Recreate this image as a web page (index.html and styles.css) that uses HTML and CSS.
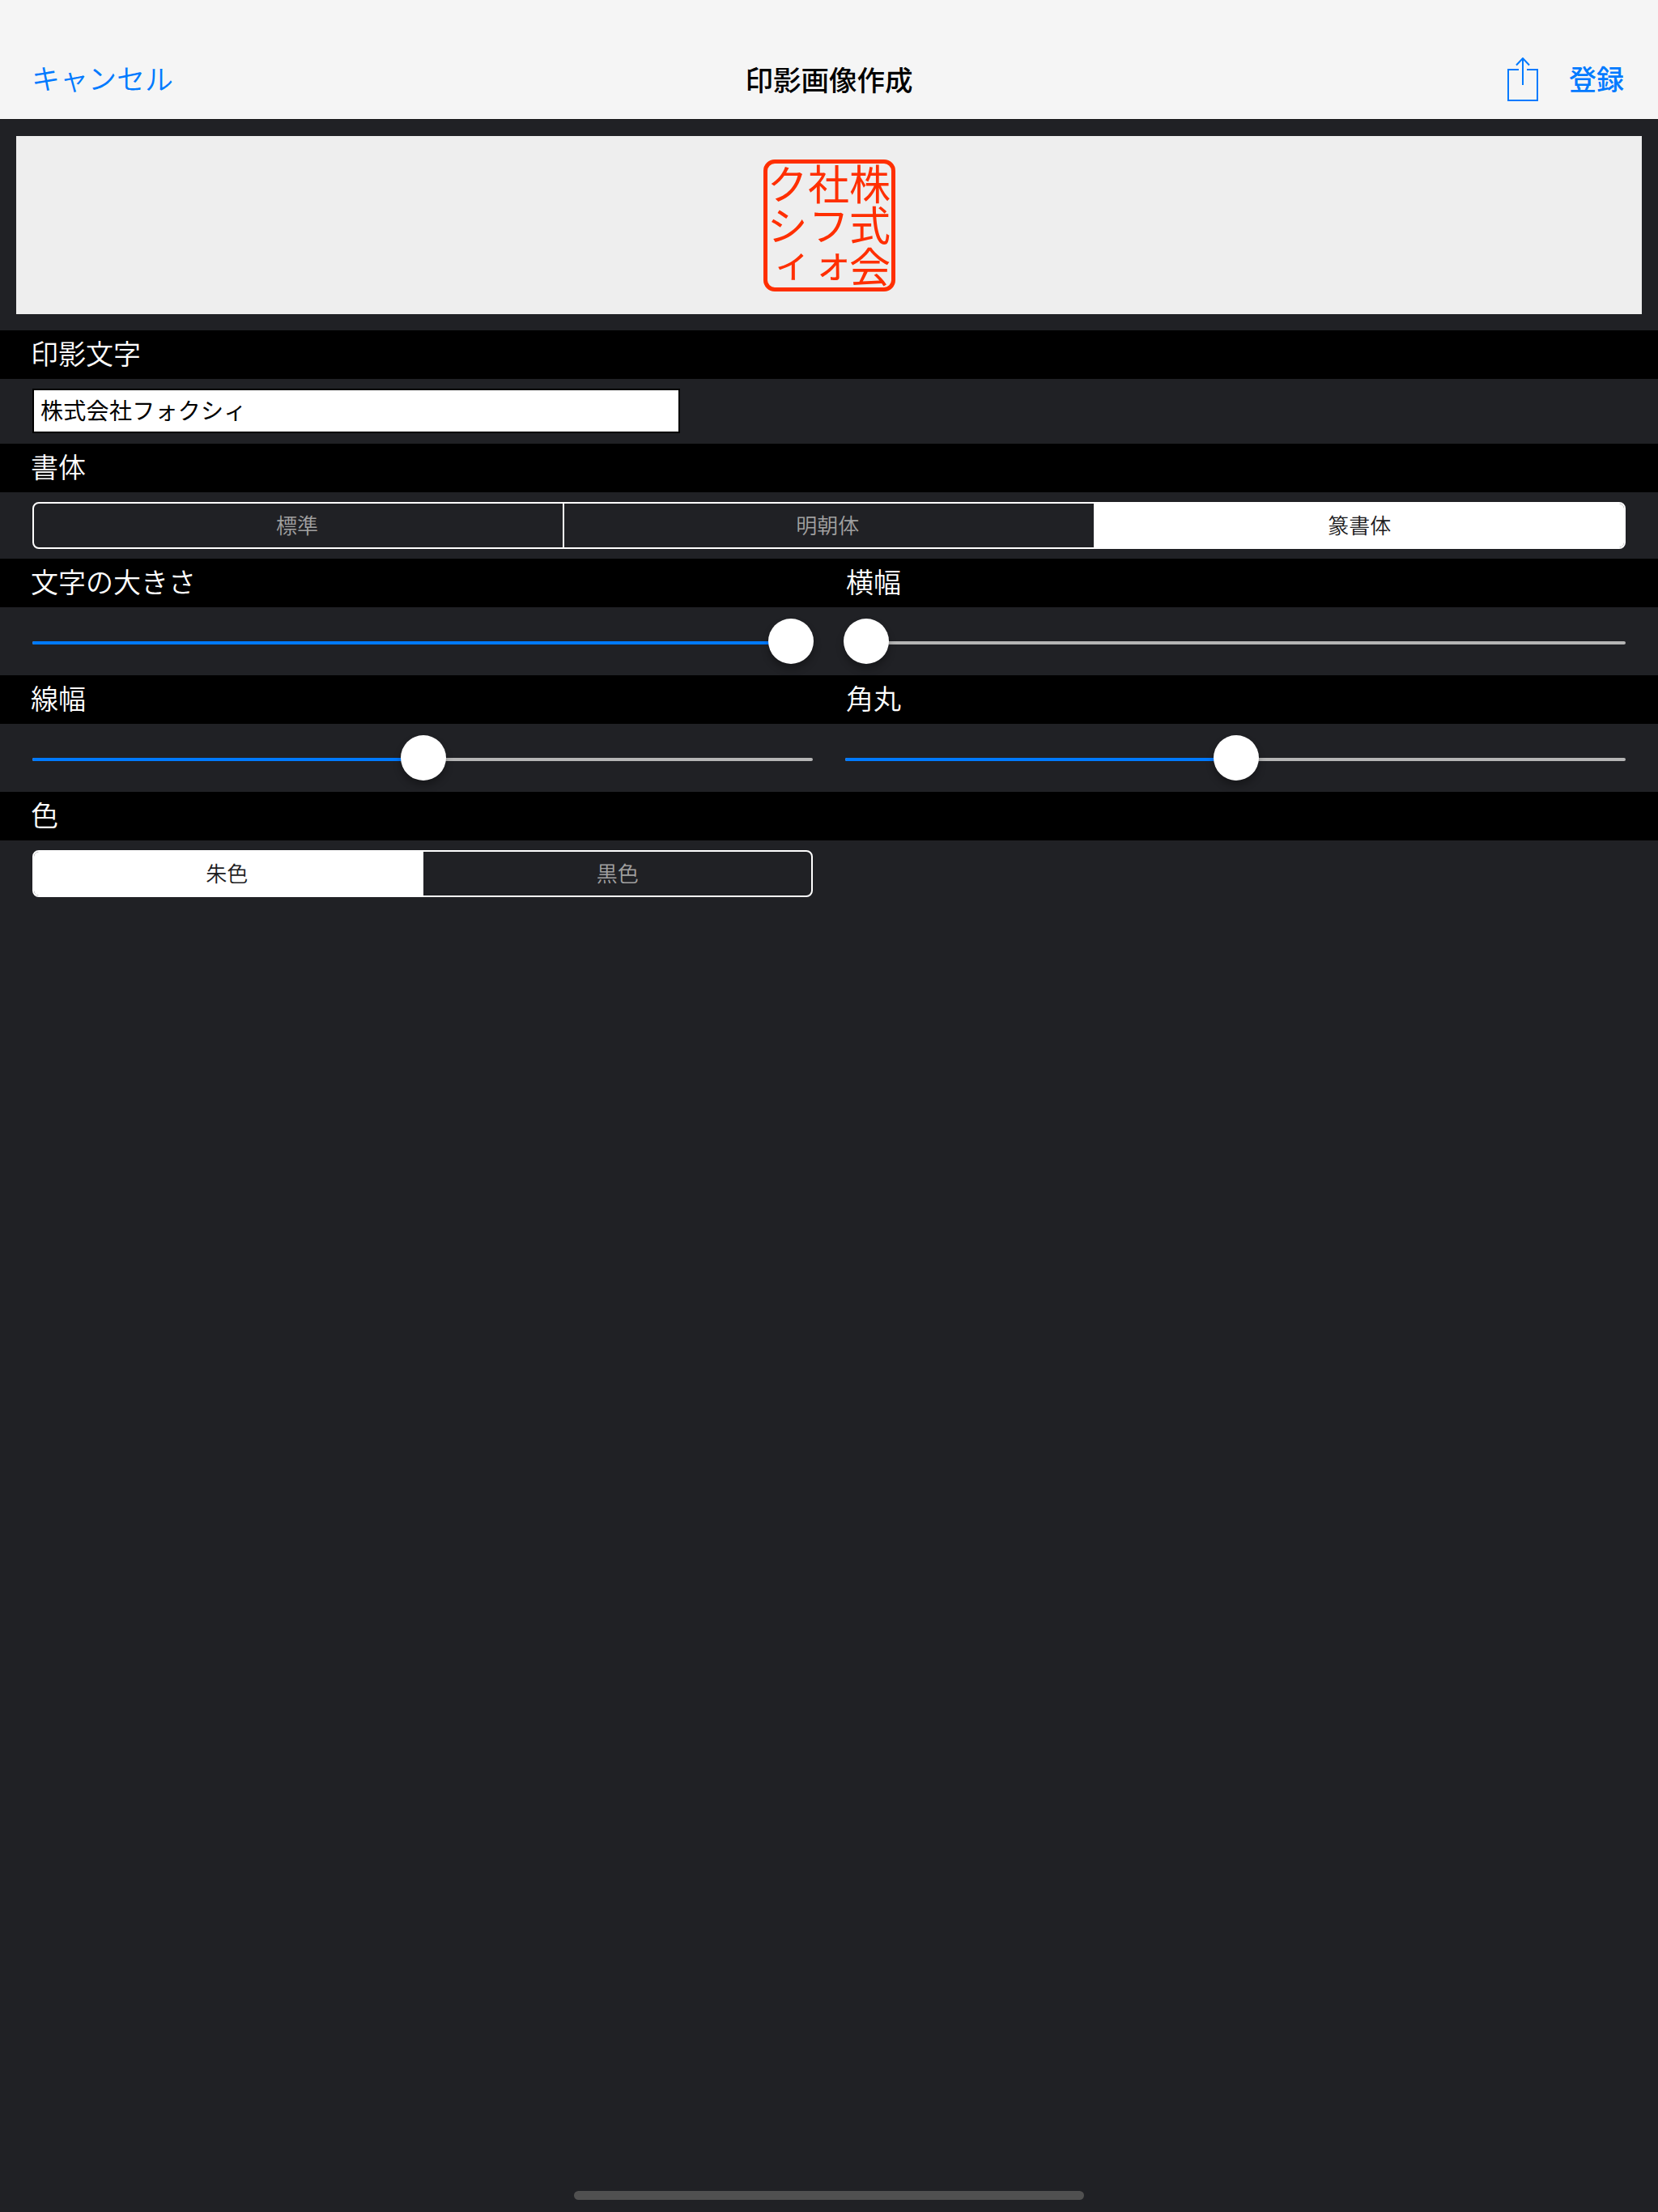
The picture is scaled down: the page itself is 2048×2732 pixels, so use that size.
FILE: index.html
```html
<!DOCTYPE html>
<html lang="ja">
<head>
    <meta charset="UTF-8">
    <title>印影画像作成</title>
    <link rel="stylesheet" href="styles.css">
</head>
<body>
    <div class="screen">
        <div class="nav">
            <span class="nav-cancel">キャンセル</span>
            <span class="nav-title">印影画像作成</span>
            <div class="nav-right">
                <svg class="share-icon" width="40" height="54" viewBox="0 0 40 54" fill="none" stroke="#007aff" stroke-width="2">
                    <path d="M15 15H2V53H38V15H25"/>
                    <path d="M20 34V1"/>
                    <path d="M12 9.500L20 1L28 9.500"/>
                </svg>
                <span class="nav-save">登録</span>
            </div>
        </div>

        <div class="preview">
            <div class="seal">
                <span>株式会</span>
                <span>社フォ</span>
                <span>クシィ</span>
            </div>
        </div>

        <div class="head"><span>印影文字</span></div>
        <div class="input-row">
            <input class="name-input" type="text" value="株式会社フォクシィ">
        </div>

        <div class="head"><span>書体</span></div>
        <div class="segment-row">
            <div class="segment">
                <div class="segment-item">標準</div>
                <div class="segment-item">明朝体</div>
                <div class="segment-item selected">篆書体</div>
            </div>
        </div>

        <div class="head two"><span>文字の大きさ</span><span>横幅</span></div>
        <div class="slider-row">
            <div class="slider" style="--value: 1"><div class="fill"></div><div class="thumb"></div></div>
            <div class="slider" style="--value: 0"><div class="fill"></div><div class="thumb"></div></div>
        </div>

        <div class="head two"><span>線幅</span><span>角丸</span></div>
        <div class="slider-row">
            <div class="slider" style="--value: 0.502"><div class="fill"></div><div class="thumb"></div></div>
            <div class="slider" style="--value: 0.502"><div class="fill"></div><div class="thumb"></div></div>
        </div>

        <div class="head"><span>色</span></div>
        <div class="segment-row half">
            <div class="segment">
                <div class="segment-item selected">朱色</div>
                <div class="segment-item">黒色</div>
            </div>
        </div>

        <div class="home-bar"></div>
    </div>
</body>
</html>
```

FILE: styles.css
```css
* {
    margin: 0;
    padding: 0;
    box-sizing: border-box;
}
html, body {
    width: 2048px;
    height: 2732px;
    background: #202125;
}
body {
    font-family: "Noto Sans CJK JP", "Liberation Sans", sans-serif;
    overflow: hidden;
}
.screen {
    position: relative;
    width: 2048px;
    height: 2732px;
}

/* nav */
.nav {
    display: flex;
    align-items: center;
    justify-content: space-between;
    position: relative;
    height: 148px;
    padding: 46px 42px 0 39px;
    background: #f5f5f5;
    border-bottom: 1px solid #1a1a1c;
    font-size: 34px;
    color: #007aff;
}
.nav-cancel {
    font-size: 35px;
    font-weight: 350;
    line-height: 48px;
    margin-top: -2px;
}
.nav-title {
    position: absolute;
    left: 0;
    right: 0;
    top: 46px;
    bottom: 0;
    display: flex;
    align-items: center;
    justify-content: center;
    color: #000;
    font-size: 34.500px;
    font-weight: 500;
}
.nav-right {
    display: flex;
    align-items: center;
    gap: 37px;
}
.nav-save {
    font-weight: 500;
}
.share-icon {
    display: block;
    margin-top: 3px;
}

/* preview */
.preview {
    display: flex;
    align-items: center;
    justify-content: center;
    height: 220px;
    margin: 20px;
    background: #eeeeee;
}
.seal {
    display: flex;
    flex-direction: row-reverse;
    justify-content: space-between;
    width: 163px;
    height: 163px;
    padding: 0 1px;
    border: 5px solid #ff2f00;
    border-radius: 14px;
    color: #ff2f00;
    font-size: 51px;
    line-height: 51px;
}
.seal span {
    display: block;
    width: 51px;
    height: 153px;
    writing-mode: vertical-rl;
    white-space: nowrap;
}

/* section headings */
.head {
    height: 60px;
    padding: 0 40px 0 38px;
    background: #000;
    color: #fff;
    font-size: 34px;
    font-weight: 350;
    line-height: 55px;
}
.head.two {
    display: grid;
    grid-template-columns: 1fr 1fr;
    column-gap: 40px;
}
.head.two span:last-child {
    margin-left: 2px;
}

/* text input */
.input-row {
    padding: 12px 40px 13px;
}
.name-input {
    display: block;
    width: 800px;
    height: 55px;
    padding: 0 8px 4px;
    border: 2px solid #000;
    border-radius: 0;
    outline: none;
    background: #fff;
    color: #000;
    font-family: inherit;
    font-size: 28px;
    letter-spacing: 0.300px;
}

/* segmented control */
.segment-row {
    padding: 12px 40px;
}
.segment-row.half {
    width: 1044px;
}
.segment {
    display: flex;
    height: 58px;
    border: 2px solid #fff;
    border-radius: 8px;
    overflow: hidden;
}
.segment-item {
    flex: 1 1 0;
    padding-right: 3px;
    border-right: 2px solid #fff;
    color: #a0a0a0;
    font-size: 26px;
    font-weight: 350;
    line-height: 52px;
    text-align: center;
}
.segment-item:last-child {
    flex-grow: 1.005;
    padding-right: 0;
    border-right: 0;
}
.segment-item.selected {
    background: #fff;
    color: #1c1c1e;
}

/* sliders */
.slider-row {
    display: grid;
    grid-template-columns: 1fr 1fr;
    column-gap: 40px;
    height: 84px;
    padding: 0 40px;
}
.slider {
    position: relative;
    height: 4px;
    margin-top: 42px;
    background: #b5b5b5;
    border-radius: 2px;
}
.fill {
    height: 4px;
    width: calc(var(--value) * 100%);
    background: #007aff;
    border-radius: 2px;
}
.thumb {
    position: absolute;
    top: -28px;
    left: calc(var(--value) * (100% - 53px) - 2px);
    width: 56px;
    height: 56px;
    border-radius: 50%;
    background: #fff;
    box-shadow: 0 6px 10px rgba(0, 0, 0, 0.3);
}

.home-bar {
    position: absolute;
    left: 709px;
    top: 2706px;
    width: 630px;
    height: 11px;
    border-radius: 6px;
    background: #505050;
}
```
